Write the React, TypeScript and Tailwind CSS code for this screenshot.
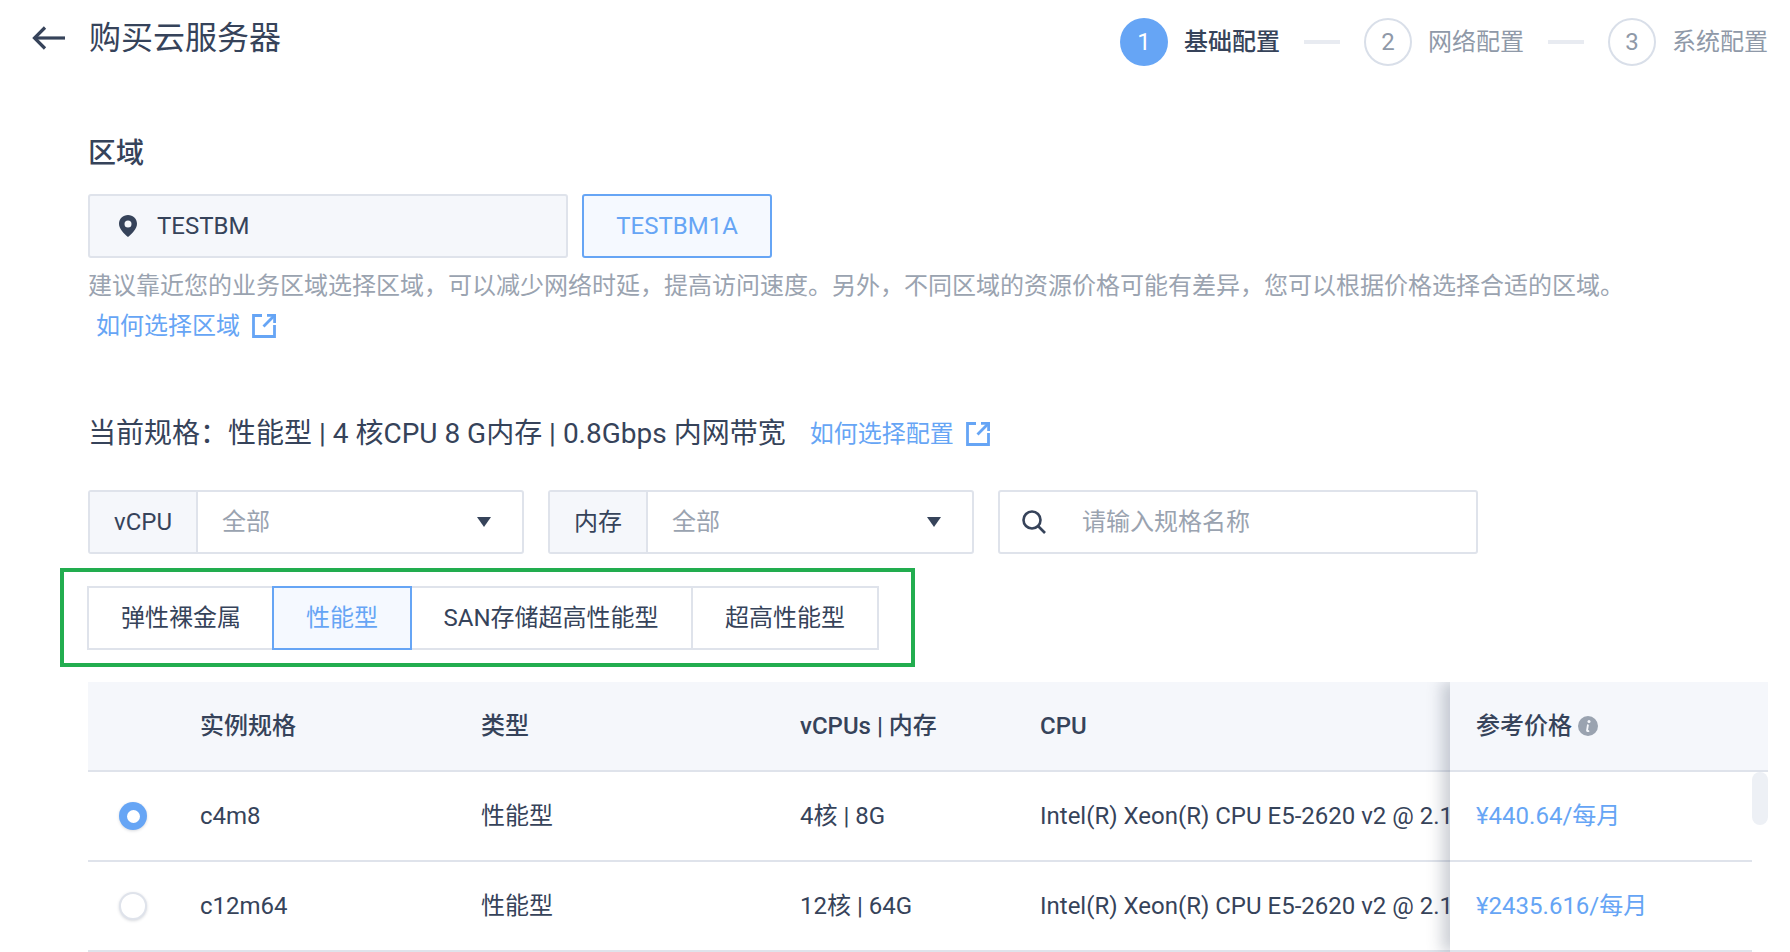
import React from "react";

const font = "font-['Roboto','Noto_Sans_CJK_SC',sans-serif]";

function ExtLink() {
  return (
    <svg width="24" height="24" viewBox="0 0 24 24" fill="none" stroke="#66a5f5" strokeWidth="2.800">
      <path d="M10 1.500H1.500v21h21V11" />
      <path d="M15 1.400h7.600V9" />
      <path d="M22.400 1.600 11.500 12.500" />
    </svg>
  );
}

function Caret() {
  return (
    <svg width="14" height="10" viewBox="0 0 14 10" fill="#36435a">
      <path d="M0 0h14L7 10z" />
    </svg>
  );
}

function Step({ n, label, active }: { n: number; label: string; active?: boolean }) {
  return (
    <div className="flex items-center gap-4">
      <div
        className={
          active
            ? "flex h-12 w-12 items-center justify-center rounded-full bg-[#66a5f5] text-[24px] text-white"
            : "flex h-12 w-12 items-center justify-center rounded-full border-2 border-[#d9dfe9] text-[24px] text-[#8f99a8]"
        }
      >
        {n}
      </div>
      <span className={active ? "text-[24px] font-medium text-[#36435a]" : "text-[24px] text-[#8f99a8]"}>{label}</span>
    </div>
  );
}

function Line() {
  return <div className="mx-6 h-1 w-9 bg-[#e8ebf1]" />;
}

function Select({ label, labelW, w }: { label: string; labelW: string; w: string }) {
  return (
    <div className={`flex h-[64px] ${w} rounded-[3px] border-2 border-[#dfe3eb]`}>
      <div className={`flex ${labelW} items-center justify-center border-r-2 border-[#dfe3eb] bg-[#f5f7fb] text-[24px] text-[#36435a]`}>
        {label}
      </div>
      <div className="flex flex-1 items-center justify-between pl-6 pr-[31px] text-[24px] text-[#9aa3b0]">
        <span>全部</span>
        <Caret />
      </div>
    </div>
  );
}

function Tab({ label, w, active, last }: { label: string; w: string; active?: boolean; last?: boolean }) {
  return (
    <div
      className={
        active
          ? `flex h-full ${w} -mx-px items-center justify-center border-2 border-[#66a5f5] bg-[#f5f9ff] text-[24px] text-[#66a5f5] relative`
          : `flex h-full ${w} items-center justify-center border-y-2 ${last ? "border-r-2" : ""} border-[#dfe3eb] text-[24px] text-[#36435a]`
      }
    >
      {label}
    </div>
  );
}

const rows = [
  { name: "c4m8", spec: "4核 | 8G", price: "¥440.64/每月", on: true },
  { name: "c12m64", spec: "12核 | 64G", price: "¥2435.616/每月", on: false },
];

export default function App() {
  return (
    <div className={`${font} h-[952px] w-[1790px] overflow-hidden bg-white text-[#36435a]`}>
      <header className="flex h-[84px] items-center justify-between pl-8 pr-[22px]">
        <div className="mb-2 flex items-center gap-6">
          <svg width="33" height="24" viewBox="0 0 33 24" fill="none" stroke="#36435a" strokeWidth="3.200">
            <path d="M33 12H3" />
            <path d="M13 1.500 2.500 12 13 22.500" />
          </svg>
          <h1 className="text-[32px] leading-[44px] text-[#36435a]">购买云服务器</h1>
        </div>
        <div className="flex items-center">
          <Step n={1} label="基础配置" active />
          <Line />
          <Step n={2} label="网络配置" />
          <Line />
          <Step n={3} label="系统配置" />
        </div>
      </header>

      <main className="pl-[88px]">
        <h2 className="mt-[51px] text-[28px] font-medium leading-[38px]">区域</h2>
        <div className="mt-[21px] flex gap-[14px]">
          <div className="flex h-[64px] w-[480px] items-center gap-[19px] rounded-[3px] border-2 border-[#dfe3eb] bg-[#f5f7fb] pl-[28px] text-[24px]">
            <svg width="20" height="24" viewBox="0 0 20 24">
              <path
                fillRule="evenodd"
                fill="#36435a"
                d="M10 1c5 0 9 3.800 9 8.800 0 5-5 10.200-9 13.200C6 20 1 14.800 1 9.800 1 4.800 5 1 10 1zm0 5.500a3.500 3.500 0 1 0 0 7 3.500 3.500 0 0 0 0-7z"
              />
            </svg>
            <span>TESTBM</span>
          </div>
          <div className="flex h-[64px] w-[190px] items-center justify-center rounded-[3px] border-2 border-[#66a5f5] bg-[#f5f9ff] text-[24px] text-[#66a5f5]">
            TESTBM1A
          </div>
        </div>
        <p className="mt-2 text-[24px] leading-[40px] text-[#9aa3b0]">
          建议靠近您的业务区域选择区域，可以减少网络时延，提高访问速度。另外，不同区域的资源价格可能有差异，您可以根据价格选择合适的区域。
        </p>
        <a className="ml-2 flex items-center gap-3 text-[24px] leading-[40px] text-[#66a5f5]">
          如何选择区域
          <ExtLink />
        </a>

        <div className="mt-[68px] flex items-center leading-[40px]">
          <span className="text-[28px]">当前规格：性能型 | 4 核CPU 8 G内存 | 0.8Gbps 内网带宽</span>
          <a className="ml-6 flex items-center gap-3 text-[24px] text-[#66a5f5]">
            如何选择配置
            <ExtLink />
          </a>
        </div>

        <div className="mt-9 flex gap-6">
          <Select label="vCPU" labelW="w-[108px]" w="w-[436px]" />
          <Select label="内存" labelW="w-[98px]" w="w-[426px]" />
          <div className="flex h-[64px] w-[480px] items-center gap-[35px] rounded-[3px] border-2 border-[#dfe3eb] pl-[21px] text-[24px] text-[#9aa3b0]">
            <svg width="26" height="26" viewBox="0 0 26 26" fill="none" stroke="#36435a" strokeWidth="2.600">
              <circle cx="11" cy="11" r="8.500" />
              <path d="M17 17l7 7" />
            </svg>
            <span>请输入规格名称</span>
          </div>
        </div>

        <div className="-ml-7 mt-[14px] w-[855px] border-4 border-[#22ad4f] pb-[13px] pl-[23px] pt-[14px]">
          <div className="flex h-[64px] w-[792px]">
            <Tab label="弹性裸金属" w="w-[186px] border-l-2" />
            <Tab label="性能型" w="w-[140px]" active />
            <Tab label="SAN存储超高性能型" w="w-[282px] border-r-2" />
            <Tab label="超高性能型" w="w-[186px]" last />
          </div>
        </div>

        <div className="mt-[15px] flex w-[1680px] overflow-hidden">
          <div className="w-[1362px] shrink-0 overflow-hidden">
            <div className="flex h-[90px] items-center whitespace-nowrap border-b-2 border-[#dfe3eb] bg-[#f5f7fb] text-[24px] font-medium">
              <div className="w-[393px] shrink-0 pl-[112px]">实例规格</div>
              <div className="w-[319px] shrink-0">类型</div>
              <div className="w-[240px] shrink-0">vCPUs | 内存</div>
              <div>CPU</div>
            </div>
            {rows.map((r) => (
              <div key={r.name} className="flex h-[90px] items-center whitespace-nowrap border-b-2 border-[#dfe3eb] text-[24px]">
                <div className="flex w-[393px] shrink-0 items-center gap-[53px] pl-[31px]">
                  {r.on ? (
                    <span className="flex h-7 w-7 items-center justify-center rounded-full bg-[#66a5f5] shadow-[0_1px_3px_rgba(54,67,90,0.2)]">
                      <span className="h-[13px] w-[13px] rounded-full bg-white" />
                    </span>
                  ) : (
                    <span className="h-7 w-7 rounded-full border-2 border-[#dfe3eb] bg-white shadow-[0_1px_3px_rgba(54,67,90,0.2)]" />
                  )}
                  <span>{r.name}</span>
                </div>
                <div className="w-[319px] shrink-0">性能型</div>
                <div className="w-[240px] shrink-0">{r.spec}</div>
                <div>Intel(R) Xeon(R) CPU E5-2620 v2 @ 2.1</div>
              </div>
            ))}
          </div>
          <div className="relative z-10 w-[318px] shrink-0 bg-white shadow-[-8px_0_14px_rgba(54,67,90,0.25)]">
            <div className="flex h-[90px] items-center gap-[6px] border-b-2 border-[#dfe3eb] bg-[#f5f7fb] pl-[26px] text-[24px] font-medium">
              参考价格
              <svg width="20" height="20" viewBox="0 0 20 20">
                <circle cx="10" cy="10" r="10" fill="#9aa3b0" />
                <circle cx="11" cy="5.500" r="1.500" fill="#f5f7fb" />
                <path d="M10 8.500 9 14.500q0 1 2.200.4" fill="none" stroke="#f5f7fb" strokeWidth="1.800" />
              </svg>
            </div>
            {rows.map((r) => (
              <div key={r.name} className="mr-4 flex h-[90px] items-center border-b-2 border-[#dfe3eb] pl-[26px] text-[24px] text-[#66a5f5]">
                {r.price}
              </div>
            ))}
            <div className="absolute right-0 top-[90px] h-[53px] w-4 rounded-lg bg-[#edf0f5]" />
          </div>
        </div>
      </main>
    </div>
  );
}
